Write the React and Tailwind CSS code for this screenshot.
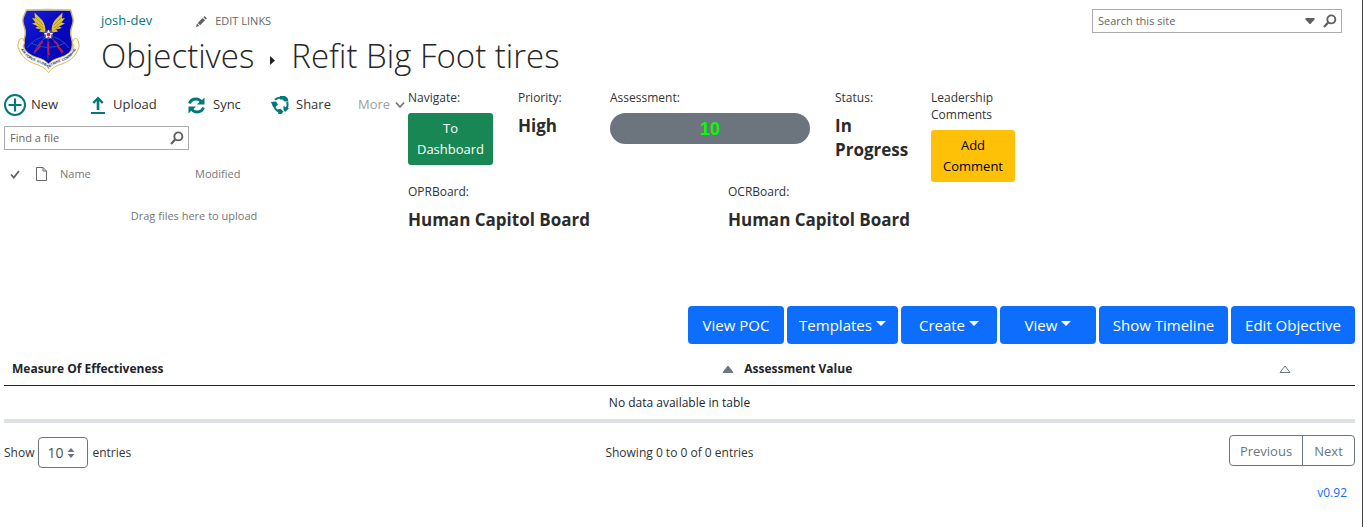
import React from "react";

const TEAL = "#03787c";

function UnitCrest() {
  return (
    <svg viewBox="0 0 66 66" className="h-[66px] w-[66px] shrink-0" role="img" aria-label="Unit crest">
      <defs>
        <linearGradient id="field" x1="0" y1="0" x2="1" y2="1">
          <stop offset="0" stopColor="#1a22d0" />
          <stop offset="0.5" stopColor="#0406c4" />
          <stop offset="1" stopColor="#0505a0" />
        </linearGradient>
        <path id="motto" d="M4.500 39 Q9 50.500 20 54.200 Q29 57 33.500 61.500 Q38 57 47 54.200 Q58 50.500 62.500 39" />
      </defs>
      <path d="M11.500 3 L33 2.500 L55.500 3 L57.500 10 Q59 14 57 19 Q54.500 25 56.500 31 Q58.500 38 56 44 Q52 51 43 54 Q36 57 33 61 Q30 57 23 54 Q14 51 10 44 Q7.500 38 9.500 31 Q11.500 25 9 19 Q7 14 8.500 10 Z" fill="url(#field)" stroke="#c9b463" strokeWidth="1.400" />
      <path d="M11.500 3 L55.500 3" stroke="#f3ecc4" strokeWidth="0.800" />
      <g fill="none" stroke="#1c5cb0" strokeWidth="0.900">
        <path d="M12 41 Q20 30 33 29 Q46 30 54 41" />
        <path d="M19 47 Q23 34 33 29 Q43 34 47 47" />
        <path d="M33 31 V52" />
        <path d="M16 36 Q33 45 50 36" />
      </g>
      <g fill="none" stroke="#c01848" strokeWidth="1.800">
        <path d="M28 34 L24.500 38 L24.500 40 L19.500 45" />
        <path d="M39 34 L42.500 37 L43 40 L48 45" />
        <path d="M33.500 35 L33 41 L34 48" />
      </g>
      <g fill="#e0c030">
        <path d="M19.500 5.500 L25 11 Q30 15 30.500 23 L29.500 25.500 L24 24.500 L26 22.500 L20 21 L23 19.500 L17 16.500 L20.500 15.500 L17 11 L20 11.500 Z" />
        <path d="M47.500 5.500 L42 11 Q37 15 36.500 23 L37.500 25.500 L43 24.500 L41 22.500 L47 21 L44 19.500 L50 16.500 L46.500 15.500 L50 11 L47 11.500 Z" />
      </g>
      <g fill="none" stroke="#8a7520" strokeWidth="0.600">
        <path d="M20 10 L28 18 M20.500 15 L28 21 M23 19.500 L28.500 24 M47 10 L39 18 M46.500 15 L39 21 M44 19.500 L38.500 24" />
      </g>
      <circle cx="33.500" cy="27.500" r="4.500" fill="#5a5f98" />
      <path d="M33.500 22.500 L34.800 26 L38.300 26.100 L35.600 28.300 L36.500 31.600 L33.500 29.800 L30.500 31.600 L31.400 28.300 L28.700 26.100 L32.200 26 Z" fill="#fff" />
      <circle cx="33.500" cy="27.600" r="1.800" fill="#d01830" />
      <path d="M3.500 35 Q5 30 8 32 Q11 35 8 39.500 Q12 47.500 22 50.500 Q30 52.500 33.500 57 Q37 52.500 45 50.500 Q55 47.500 59 39.500 Q56 35 59 32 Q62 30 63.500 35 Q65.500 39 62.500 44 Q58 53 48 56.500 Q38 59.500 33.500 65.500 Q29 59.500 19 56.500 Q9 53 4.500 44 Q1.500 39 3.500 35 Z" fill="#fbfaf0" stroke="#d4b64c" strokeWidth="0.900" />
      <text fontFamily="Liberation Sans, sans-serif" fontWeight="700" fontSize="3.500" fill="#171b70">
        <textPath href="#motto" startOffset="50%" textAnchor="middle">AIR FORCE GLOBAL STRIKE COMMAND</textPath>
      </text>
    </svg>
  );
}

function SearchGlyph() {
  return (
    <svg viewBox="0 0 14 14" className="h-3.5 w-3.5" fill="none" stroke="#606060" aria-hidden="true">
      <circle cx="8.300" cy="5.400" r="4" strokeWidth="1.900" />
      <path d="M5.400 8.300 L1 13" strokeWidth="2.200" />
    </svg>
  );
}

function NewIcon() {
  return (
    <svg viewBox="0 0 22 22" className="h-[22px] w-[22px]" fill="none" stroke={TEAL} strokeWidth="2" aria-hidden="true">
      <circle cx="11" cy="11" r="10" />
      <path d="M11 4.500 V17.500 M4.500 11 H17.500" strokeWidth="2.200" />
    </svg>
  );
}

function UploadIcon() {
  return (
    <svg viewBox="0 0 14 18" className="h-[18px] w-3.5" fill="none" stroke={TEAL} aria-hidden="true">
      <path d="M7 14 V2.500" strokeWidth="2.600" />
      <path d="M2.300 7 L7 2.300 L11.700 7" strokeWidth="2.400" />
      <path d="M0 17 H14" strokeWidth="2" />
    </svg>
  );
}

function SyncIcon() {
  return (
    <svg viewBox="0 0 17 17" className="h-[17px] w-[17px]" aria-hidden="true">
      <g fill="none" stroke={TEAL} strokeWidth="2.800">
        <path d="M1.500 6.500 Q3 2 8 2 Q11.500 2 13.500 5" />
        <path d="M15.500 10.500 Q14 15 9 15 Q5.500 15 3.500 12" />
      </g>
      <path d="M16.500 0.500 V7.500 H9 L11.500 5 L14 3 Z" fill={TEAL} />
      <path d="M0.500 16.500 V9.500 H8 L5.500 12 L3 14 Z" fill={TEAL} />
    </svg>
  );
}

function ShareIcon() {
  return (
    <svg viewBox="0 0 19 18" className="h-[18px] w-[19px]" aria-hidden="true">
      <g fill="none" stroke={TEAL} strokeWidth="2">
        <path d="M4 3.800 Q6.500 1.300 10 1.400" />
        <path d="M3 9 Q3.500 13.500 7.500 15.300" />
        <path d="M16.200 6 Q17.500 10.500 14.300 14" />
      </g>
      <g fill={TEAL}>
        <path d="M9 0 H14 L16.500 2 L17.500 5.500 H13.500 L11.500 3.500 H9 Z" />
        <path d="M0 6 L5 5.500 L7 8.500 L4.500 11 H2 Z" />
        <path d="M6.500 13.500 L9.500 12.700 L12.500 15.500 L10.500 18 H7.500 Z" />
        <path d="M12.500 10 L18 12.500 L14 16 L12.500 14 Z" />
      </g>
    </svg>
  );
}

const tools = [
  { name: "New", icon: <NewIcon />, box: "w-[87px] gap-[5px]" },
  { name: "Upload", icon: <UploadIcon />, box: "w-[97px] gap-2" },
  { name: "Sync", icon: <SyncIcon />, box: "w-[83px] gap-2" },
  { name: "Share", icon: <ShareIcon />, box: "w-[87px] gap-[6px]" },
];

function Library() {
  return (
    <section className="w-[404px] shrink-0 pt-[5px]">
      <div className="flex h-[22px] items-center text-[13px] text-[#333]">
        {tools.map((t) => (
          <button key={t.name} type="button" className={"flex shrink-0 items-center whitespace-nowrap " + t.box}>
            {t.icon}
            <span>{t.name}</span>
          </button>
        ))}
        <button type="button" className="flex shrink-0 items-center gap-[5px] text-[#a0a0a0]">
          More
          <svg viewBox="0 0 10 8" className="h-2 w-2.5" fill="none" stroke="#777" strokeWidth="1.800" aria-hidden="true">
            <path d="M1 1.500 L5 6 L9 1.500" />
          </svg>
        </button>
      </div>
      <form className="mt-2.5 flex h-6 w-[185px] items-center border border-[#ababab] pr-1 pl-[5px]" onSubmit={(e) => e.preventDefault()}>
        <input type="text" aria-label="Find a file" placeholder="Find a file" className="min-w-0 flex-1 text-[11px] outline-none placeholder:text-[#666]" />
        <button type="submit" aria-label="Search files">
          <SearchGlyph />
        </button>
      </form>
      <table className="mt-3 text-left text-[11px] leading-6 text-[#777]">
        <thead>
          <tr>
            <th className="w-8 pl-1.5 font-normal">
              <svg viewBox="0 0 10 9" className="h-[9px] w-2.5" fill="none" stroke="#606060" strokeWidth="1.800" role="img" aria-label="Selected">
                <path d="M1 4.500 L3.800 7.500 L9 1" />
              </svg>
            </th>
            <th className="w-6 font-normal">
              <svg viewBox="0 0 11 14" className="h-3.5 w-[11px]" fill="none" stroke="#666" role="img" aria-label="Type">
                <path d="M0.500 0.500 H7 L10.500 4 V13.500 H0.500 Z M7 0.500 V4 H10.500" />
              </svg>
            </th>
            <th className="w-[135px] font-normal">Name</th>
            <th className="font-normal">Modified</th>
          </tr>
        </thead>
      </table>
      <p className="mt-[22px] pr-6 text-center text-[11px] leading-4 text-[#777]">Drag files here to upload</p>
    </section>
  );
}

function Field({ label, children }) {
  return (
    <div>
      <div className="mb-[7px] text-[12px] leading-[17px] text-[#333]">{label}</div>
      {children}
    </div>
  );
}

function Value({ children }) {
  return <div className="pt-px text-[17px] leading-6 font-bold text-[#2b2b2b]">{children}</div>;
}

function Details() {
  return (
    <section className="min-w-0 flex-1">
      <div className="grid grid-cols-[110px_92px_225px_96px_84px]">
        <Field label="Navigate:">
          <button type="button" className="h-[52px] w-[85px] rounded-[3px] bg-[#198754] text-[13px] leading-[21px] text-white">
            To
            <br />
            Dashboard
          </button>
        </Field>
        <Field label="Priority:">
          <Value>High</Value>
        </Field>
        <Field label="Assessment:">
          <div className="flex h-[31px] w-[200px] items-center justify-center rounded-full bg-[#6c757d] font-['Liberation_Sans',sans-serif] text-lg font-bold text-[#00ff00]">
            10
          </div>
        </Field>
        <Field label="Status:">
          <Value>
            In
            <br />
            Progress
          </Value>
        </Field>
        <Field label={<>Leadership<br />Comments</>}>
          <button type="button" className="h-[52px] w-[84px] rounded-[3px] bg-[#ffc107] text-[13px] leading-[21px] text-black">
            Add
            <br />
            Comment
          </button>
        </Field>
      </div>
      <div className="mt-px grid grid-cols-[320px_320px]">
        <Field label="OPRBoard:">
          <Value>Human Capitol Board</Value>
        </Field>
        <Field label="OCRBoard:">
          <Value>Human Capitol Board</Value>
        </Field>
      </div>
    </section>
  );
}

const actions = [
  { name: "View POC", w: "w-24" },
  { name: "Templates", w: "w-[111px]", menu: true },
  { name: "Create", w: "w-24", menu: true },
  { name: "View", w: "w-24", menu: true },
  { name: "Show Timeline", w: "w-[129px]" },
  { name: "Edit Objective", w: "w-[124px]" },
];

function Actions() {
  return (
    <div className="mt-[74px] flex justify-end gap-[3px]">
      {actions.map((a) => (
        <button key={a.name} type="button" className={"flex h-[38px] items-center justify-center gap-1 rounded bg-[#0d6efd] text-[15px] whitespace-nowrap text-white " + a.w}>
          {a.name}
          {a.menu && (
            <svg viewBox="0 0 10 5" className="mb-1 h-[5px] w-2.5" fill="#fff" aria-hidden="true">
              <path d="M0 0 H10 L5 5 Z" />
            </svg>
          )}
        </button>
      ))}
    </div>
  );
}

function SortArrow({ active }) {
  return (
    <svg viewBox="0 0 12 8" className="h-2 w-3" fill={active ? "#6c757d" : "none"} stroke="#6c757d" aria-hidden="true">
      <path d="M1 7.500 L6 1 L11 7.500 Z" />
    </svg>
  );
}

function Measures() {
  return (
    <table className="mt-2 w-full table-fixed border-collapse text-[12px] text-[#212529]">
      <colgroup>
        <col className="w-[54.200%]" />
        <col className="w-[41.200%]" />
        <col />
      </colgroup>
      <thead>
        <tr className="h-[33px] border-b border-[#212529] text-left">
          <th className="pt-px pl-2 font-bold">
            <div className="flex items-center justify-between pr-0.5">
              Measure Of Effectiveness
              <SortArrow active />
            </div>
          </th>
          <th className="pt-px pl-2 font-bold">
            <div className="flex items-center justify-between pr-0.5">
              Assessment Value
              <SortArrow />
            </div>
          </th>
          <th aria-label="Actions" />
        </tr>
      </thead>
      <tbody>
        <tr className="h-9 border-b-4 border-[#dee2e6]">
          <td colSpan={3} className="pt-px text-center">No data available in table</td>
        </tr>
      </tbody>
    </table>
  );
}

function TableFooter() {
  return (
    <div className="mt-3 grid grid-cols-[1fr_auto_1fr] items-start text-[12px] leading-4 text-[#333]">
      <label className="mt-0.5 flex items-center gap-1">
        <span>Show</span>
        <span className="grid items-center">
          <select defaultValue="10" className="col-start-1 row-start-1 h-[31px] w-[50px] appearance-none rounded border border-[#6c757d] bg-white pl-2 text-[14px] text-[#495057]">
            <option>10</option>
            <option>25</option>
            <option>50</option>
          </select>
          <svg viewBox="0 0 8 10" className="pointer-events-none col-start-1 row-start-1 mr-[13px] h-2.5 w-2 justify-self-end" fill="#6c757d" aria-hidden="true">
            <path d="M4 0 L7.500 4 H0.500 Z M4 10 L0.500 6 H7.500 Z" />
          </svg>
        </span>
        <span>entries</span>
      </label>
      <p className="mt-2.5">Showing 0 to 0 of 0 entries</p>
      <nav aria-label="Pages" className="flex justify-end text-[13px] text-[#6c757d]">
        <button type="button" className="h-[31px] w-[74px] rounded-l border border-[#6c757d]">Previous</button>
        <button type="button" className="-ml-px h-[31px] w-[53px] rounded-r border border-[#6c757d]">Next</button>
      </nav>
    </div>
  );
}

export default function App() {
  return (
    <div className="min-h-screen border-r border-[#444] bg-white pr-[7px] pl-1 font-['Open_Sans','Noto_Sans',sans-serif]">
      <header className="flex h-[89px] items-start pt-[7px] pl-[11px]">
        <UnitCrest />
        <div className="ml-5 flex-1">
          <div className="flex h-7 items-center">
            <a href="#site" className="text-[13px] text-[#03787c]">josh-dev</a>
            <button type="button" className="ml-11 flex items-center gap-2 text-[11px] text-[#666]">
              <svg viewBox="0 0 11 11" className="h-[11px] w-[11px]" fill="#606060" aria-hidden="true">
                <path d="M0 11 L1 7.600 L3.400 10 Z M1.700 6.900 L6.700 1.900 L9.100 4.300 L4.100 9.300 Z M7.400 1.200 L8.600 0 L11 2.400 L9.800 3.600 Z" />
              </svg>
              EDIT LINKS
            </button>
          </div>
          <h1 className="flex items-center text-[33px] leading-[42px] font-light whitespace-nowrap text-[#262626]">
            Objectives
            <svg viewBox="0 0 5 9" className="mx-4 mt-2 h-[9px] w-[5px]" fill="#222" aria-hidden="true">
              <path d="M0 0 L5 4.500 L0 9 Z" />
            </svg>
            Refit Big Foot tires
          </h1>
        </div>
        <form role="search" className="mt-0.5 mr-[13px] flex h-6 w-[250px] items-center border border-[#ababab] pr-1 pl-[5px]" onSubmit={(e) => e.preventDefault()}>
          <input type="search" aria-label="Search this site" placeholder="Search this site" className="min-w-0 flex-1 text-[11px] outline-none placeholder:text-[#666]" />
          <button type="button" aria-label="Search scope" className="mr-2">
            <svg viewBox="0 0 10 6" className="h-1.5 w-2.5" fill="#606060" aria-hidden="true">
              <path d="M0.500 0 H9.500 V1.500 L5.500 6 H4.500 L0.500 1.500 Z" />
            </svg>
          </button>
          <button type="submit" aria-label="Search site">
            <SearchGlyph />
          </button>
        </form>
      </header>
      <main>
        <div className="flex items-start">
          <Library />
          <Details />
        </div>
        <Actions />
        <Measures />
        <TableFooter />
        <div className="mt-[17px] pr-2 text-right text-[12px] leading-4">
          <a href="#version" className="text-[#0d6efd]">v0.92</a>
        </div>
      </main>
    </div>
  );
}
